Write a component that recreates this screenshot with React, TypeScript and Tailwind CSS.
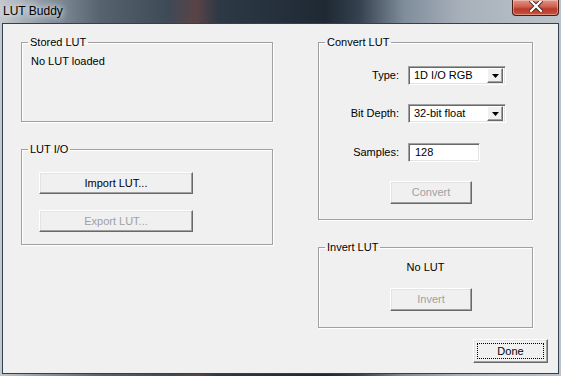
import React from 'react';

const font = "font-['Liberation_Sans',Arial,sans-serif]";

const Button = ({
  label,
  disabled = false,
  focused = false,
  className = '',
}: {
  label: string;
  disabled?: boolean;
  focused?: boolean;
  className?: string;
}) => (
  <button
    type="button"
    className={`relative flex items-center justify-center bg-[#f0f0f0] border border-t-white border-l-white border-b-[#696969] border-r-[#696969] shadow-[inset_-1px_-1px_0_#a0a0a0,inset_1px_1px_0_#e3e3e3] text-[11px] leading-[13px] ${
      disabled ? 'text-[#a0a0a0]' : 'text-black'
    } ${className}`}
  >
    {label}
    {focused && <span className="absolute inset-[3px] border border-dotted border-black" />}
  </button>
);

const Sunken = ({ className = '', children }: { className?: string; children: React.ReactNode }) => (
  <div
    className={`flex items-center bg-white border border-t-[#a0a0a0] border-l-[#a0a0a0] border-b-white border-r-white shadow-[inset_1px_1px_0_#696969,inset_-1px_-1px_0_#e3e3e3] ${className}`}
  >
    {children}
  </div>
);

const Combo = ({ value }: { value: string }) => (
  <Sunken className="w-[98px] h-[19px] pl-[5px] pr-[2px]">
    <span className="flex-1 text-[11px] leading-[13px] text-black">{value}</span>
    <span className="flex items-center justify-center w-[16px] h-[15px] bg-[#f0f0f0] border border-t-white border-l-white border-b-[#696969] border-r-[#696969] shadow-[inset_-1px_-1px_0_#a0a0a0]">
      <svg width="7" height="4" viewBox="0 0 7 4">
        <polygon points="0,0 7,0 3.5,4" fill="#000" />
      </svg>
    </span>
  </Sunken>
);

const Group = ({
  title,
  className = '',
  children,
}: {
  title: string;
  className?: string;
  children: React.ReactNode;
}) => (
  <fieldset
    className={`border border-[#a0a0a0] shadow-[1px_1px_0_#fff,inset_1px_1px_0_#fff] ${className}`}
  >
    <legend className="ml-[6px] px-[2px] text-[11px] leading-[13px] text-black">{title}</legend>
    {children}
  </fieldset>
);

const Row = ({ label, children, className = '' }: { label: string; children: React.ReactNode; className?: string }) => (
  <div className={`flex items-center ${className}`}>
    <span className="w-[80px] text-right text-[11px] leading-[13px] text-black">{label}</span>
    <div className="ml-[9px]">{children}</div>
  </div>
);

export default function App() {
  return (
    <div
      className={`relative w-[561px] h-[376px] flex flex-col px-[2px] pb-[2px] overflow-hidden bg-[linear-gradient(90deg,#c3c9cf_0%,#8a96a1_8%,#56636f_18%,#3e4a56_30%,#5a4347_35%,#2d3945_39%,#1e2934_58%,#35414f_64%,#7f8c9a_72%,#a7b0ba_82%,#bcc3ca_100%)] ${font}`}
    >
      {/* Title bar */}
      <div className="h-[23px] flex items-center pl-[1px] pb-[2px]">
        <span className="text-[12px] text-black [text-shadow:0_0_6px_#fff,0_0_10px_rgba(255,255,255,0.8)]">
          LUT Buddy
        </span>
      </div>
      <div className="absolute left-[512px] top-0 w-[47px] h-[16px] rounded-b-[4px] border border-t-0 border-[#4a1c17] bg-[linear-gradient(180deg,#e19384_0%,#d0604f_45%,#b93a29_60%,#c8553f_100%)] shadow-[inset_0_0_0_1px_rgba(255,255,255,0.35)] flex items-start justify-center">
        <svg width="14" height="11" viewBox="0 0 14 11" className="mt-[1px]">
          <path d="M2 0 L12 10 M12 0 L2 10" stroke="#3b2a28" strokeWidth="4" strokeLinecap="square" />
          <path d="M2 0 L12 10 M12 0 L2 10" stroke="#ffffff" strokeWidth="2.2" strokeLinecap="square" />
        </svg>
      </div>

      {/* Client area */}
      <div className="flex-1 flex flex-col border border-[#34414d] bg-[#f0f0f0] pt-[12px] pl-[18px] pr-[10px]">
        <div className="flex gap-[45px]">
          <div className="flex flex-col w-[252px]">
            <Group title="Stored LUT" className="h-[86px]">
              <div className="pt-[6px] pl-[9px] text-[11px] leading-[13px] text-black">No LUT loaded</div>
            </Group>
            <Group title="LUT I/O" className="mt-[21px] h-[102px]">
              <div className="flex flex-col pt-[16px] pl-[17px] gap-[16px]">
                <Button label="Import LUT..." className="w-[154px] h-[22px]" />
                <Button label="Export LUT..." disabled className="w-[154px] h-[22px]" />
              </div>
            </Group>
          </div>

          <div className="flex flex-col w-[215px]">
            <Group title="Convert LUT" className="h-[184px]">
              <div className="flex flex-col pt-[17px]">
                <Row label="Type:">
                  <Combo value="1D I/O RGB" />
                </Row>
                <Row label="Bit Depth:" className="mt-[19px]">
                  <Combo value="32-bit float" />
                </Row>
                <Row label="Samples:" className="mt-[20px]">
                  <Sunken className="w-[72px] h-[19px] pl-[6px]">
                    <span className="text-[11px] leading-[13px] text-black">128</span>
                  </Sunken>
                </Row>
                <Button label="Convert" disabled className="mt-[19px] ml-[71px] w-[82px] h-[23px]" />
              </div>
            </Group>
            <Group title="Invert LUT" className="mt-[21px] h-[87px]">
              <div className="flex flex-col pt-[7px]">
                <div className="text-center text-[11px] leading-[13px] text-black">No LUT</div>
                <Button label="Invert" disabled className="mt-[14px] ml-[71px] w-[82px] h-[23px]" />
              </div>
            </Group>
          </div>
        </div>

        <div className="flex justify-end mt-[11px]">
          <Button label="Done" focused className="w-[75px] h-[24px]" />
        </div>
      </div>
    </div>
  );
}
